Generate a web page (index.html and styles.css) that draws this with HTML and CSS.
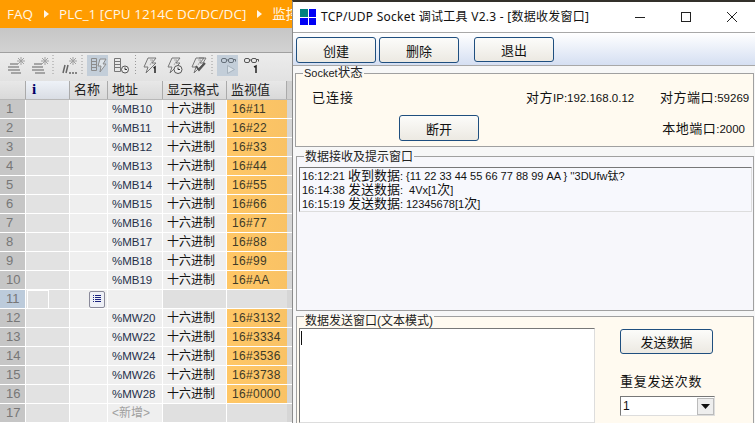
FILE: index.html
```html
<!DOCTYPE html>
<html lang="zh">
<head>
<meta charset="utf-8">
<title>TCP/UDP Socket</title>
<link rel="stylesheet" href="styles.css">
</head>
<body>
<div class="desktop">
  <section class="tia">
    <div class="crumbs"><span>FAQ</span><i class="arrow"></i><span>PLC_1 [CPU 1214C DC/DC/DC]</span><i class="arrow"></i><span>监控</span></div>
    <div class="band"></div>
    <div class="tools">
      <svg width="292" height="28" viewBox="0 0 292 28" fill="none">
        <defs>
          <g id="lines" stroke="#8f8f8f" stroke-width="1.500"><path d="M2 6h8M0 9h11M0 12h12M3 15h10"/></g>
          <g id="star" stroke="#a2a2a2" stroke-width="1"><path d="M4 0v8M0 4h8M1 1l6 6M7 1l-6 6"/></g>
          <g id="bolt" stroke="#777" stroke-width="1"><path d="M5 1h8l-4 5h4L3 16l2-6H1z" fill="#e6e6e6"/><path d="M7 3h3l-3 5" stroke="#aaa"/></g>
        </defs>
        <use href="#lines" x="8" y="5"/><use href="#star" x="17" y="4"/>
        <use href="#lines" x="32" y="5"/><use href="#star" x="41" y="4"/>
        <path d="M53 2v21M82 2v21M135.500 2v21M212 2v21" stroke="#9a9a9a" stroke-dasharray="1 2"/>
        <path d="M63 20l2-8M66 20l2-8" stroke="#666" stroke-width="1.500"/><path d="M69 20h2M72 20h2M75 20h2" stroke="#666" stroke-width="1.500"/><use href="#star" x="69" y="4"/>
        <rect x="87" y="2" width="21" height="21" fill="#c3ced9"/>
        <path d="M91.500 5.500h5v12h-5zM92 8.500h4M92 11.500h4M92 14.500h4" stroke="#8c8c8c"/><path d="M100 6h6l-3 5h3l-6 8 1-6h-3z" fill="#dfe5ea" stroke="#8c8c8c"/>
        <path d="M114.500 5.500h6v13h-6zM115 8.500h5M115 11.500h5M115 14.500h5" stroke="#777"/><circle cx="125" cy="16.500" r="3.500" fill="#eee" stroke="#555"/><path d="M125 14.500v2h2" stroke="#333"/>
        <use href="#bolt" x="143" y="4"/><path d="M155 20v-6l-1.500 1" stroke="#222" stroke-width="1.500"/>
        <use href="#bolt" x="167" y="4"/><circle cx="178" cy="16.500" r="4" fill="#eee" stroke="#555"/><path d="M178 14.500v2h2" stroke="#333"/>
        <use href="#bolt" x="191" y="4"/><path d="M199 5h7l-3 5" stroke="#777"/><path d="M196 13l3 4 6-7" stroke="#555" stroke-width="2"/>
        <rect x="217" y="2" width="21" height="21" fill="#c3ced9"/>
        <rect x="221.500" y="5.500" width="5" height="4" rx="1.500" stroke="#66707a"/><rect x="228.500" y="5.500" width="5" height="4" rx="1.500" stroke="#66707a"/><path d="M226 7h3M233 6.500h2.500v2" stroke="#66707a"/><path d="M227.500 12.500v8l7-4z" fill="#dbe3ea" stroke="#a7b3be"/>
        <rect x="244.500" y="5.500" width="5" height="4" rx="1.500" stroke="#555"/><rect x="251.500" y="5.500" width="5" height="4" rx="1.500" stroke="#555"/><path d="M249 7h3M256 6.500h2.500v2" stroke="#555"/><path d="M256 20v-7l-2 1" stroke="#222" stroke-width="1.500"/>
      </svg>
    </div>
    <div class="row head">
      <div></div>
      <div class="info">i</div>
      <div>名称</div><div>地址</div><div>显示格式</div><div>监视值</div>
    </div>
    <div class="row"><div class="n">1</div><div></div><div></div><div class="a">%MB10</div><div class="f">十六进制</div><div class="v">16#11</div></div>
    <div class="row"><div class="n">2</div><div></div><div></div><div class="a">%MB11</div><div class="f">十六进制</div><div class="v">16#22</div></div>
    <div class="row"><div class="n">3</div><div></div><div></div><div class="a">%MB12</div><div class="f">十六进制</div><div class="v">16#33</div></div>
    <div class="row"><div class="n">4</div><div></div><div></div><div class="a">%MB13</div><div class="f">十六进制</div><div class="v">16#44</div></div>
    <div class="row"><div class="n">5</div><div></div><div></div><div class="a">%MB14</div><div class="f">十六进制</div><div class="v">16#55</div></div>
    <div class="row"><div class="n">6</div><div></div><div></div><div class="a">%MB15</div><div class="f">十六进制</div><div class="v">16#66</div></div>
    <div class="row"><div class="n">7</div><div></div><div></div><div class="a">%MB16</div><div class="f">十六进制</div><div class="v">16#77</div></div>
    <div class="row"><div class="n">8</div><div></div><div></div><div class="a">%MB17</div><div class="f">十六进制</div><div class="v">16#88</div></div>
    <div class="row"><div class="n">9</div><div></div><div></div><div class="a">%MB18</div><div class="f">十六进制</div><div class="v">16#99</div></div>
    <div class="row"><div class="n">10</div><div></div><div></div><div class="a">%MB19</div><div class="f">十六进制</div><div class="v">16#AA</div></div>
    <div class="row blank"><div class="n sel">11</div><div class="focus"><span class="box"></span></div><div class="pick"><span class="listbtn"><svg width="10" height="10" viewBox="0 0 10 10"><path d="M1 1.500h1M1 3.500h1M1 5.500h1M1 7.500h1M3 1.500h6M3 3.500h6M3 5.500h6M3 7.500h6" stroke="#1a237e"/></svg></span></div><div class="a"></div><div class="f"></div><div class="v"></div></div>
    <div class="row"><div class="n">12</div><div></div><div></div><div class="a">%MW20</div><div class="f">十六进制</div><div class="v">16#3132</div></div>
    <div class="row"><div class="n">13</div><div></div><div></div><div class="a">%MW22</div><div class="f">十六进制</div><div class="v">16#3334</div></div>
    <div class="row"><div class="n">14</div><div></div><div></div><div class="a">%MW24</div><div class="f">十六进制</div><div class="v">16#3536</div></div>
    <div class="row"><div class="n">15</div><div></div><div></div><div class="a">%MW26</div><div class="f">十六进制</div><div class="v">16#3738</div></div>
    <div class="row"><div class="n">16</div><div></div><div></div><div class="a">%MW28</div><div class="f">十六进制</div><div class="v">16#0000</div></div>
    <div class="row blank"><div class="n">17</div><div></div><div></div><div class="a new">&lt;新增&gt;</div><div class="f"></div><div class="v"></div></div>
  </section>

  <section class="win">
    <header class="titlebar">
      <span class="logo"><i class="teal"></i><i></i><i></i><i></i></span>
      <span class="wtitle">TCP/UDP Socket 调试工具 V2.3 - [数据收发窗口]</span>
      <span class="ctl"><svg width="12" height="12" viewBox="0 0 12 12"><path d="M1 6.500h10" stroke="#222"/></svg></span>
      <span class="ctl"><svg width="12" height="12" viewBox="0 0 12 12"><rect x="1.500" y="1.500" width="9" height="9" fill="none" stroke="#222"/></svg></span>
      <span class="ctl"><svg width="12" height="12" viewBox="0 0 12 12"><path d="M1 1l10 10M11 1L1 11" stroke="#222"/></svg></span>
    </header>
    <div class="bar">
      <button class="btn">创建</button>
      <button class="btn">删除</button>
      <button class="btn exit">退出</button>
    </div>
    <div class="groups">
      <fieldset class="group status">
        <legend>Socket<span class="zh">状态</span></legend>
        <div class="line one"><span class="conn">已连接</span><span class="ip"><span class="wide">对方</span>IP:192.168.0.12</span><span class="port"><span class="wide">对方端口</span>:59269</span></div>
        <div class="line two"><button class="btn off">断开</button><span class="local"><span class="wide">本地端口</span>:2000</span></div>
      </fieldset>
      <fieldset class="group recv">
        <legend>数据接收及提示窗口</legend>
        <div class="log">
          <div>16:12:21 <span class="zh">收到数据</span>: {11 22 33 44 55 66 77 88 99 AA } ''3DUfw钛?</div>
          <div>16:14:38 <span class="zh">发送数据</span>:&nbsp;&nbsp;4Vx[1<span class="zh">次</span>]</div>
          <div>16:15:19 <span class="zh">发送数据</span>: 12345678[1<span class="zh">次</span>]</div>
        </div>
      </fieldset>
      <fieldset class="group send">
        <legend>数据发送窗口(文本模式)</legend>
        <div class="sendbody">
          <div class="input"><span class="caret"></span></div>
          <div class="side">
            <button class="btn sendbtn">发送数据</button>
            <div class="repeat">重复发送次数</div>
            <div class="combo"><span>1</span><span class="drop"><svg width="9" height="5" viewBox="0 0 9 5"><path d="M0 0h9L4.500 5z" fill="#111"/></svg></span></div>
          </div>
        </div>
      </fieldset>
    </div>
  </section>
</div>
</body>
</html>
```
FILE: styles.css
```css
* { box-sizing: border-box; }
html, body { margin: 0; padding: 0; }
body { width: 755px; height: 423px; overflow: hidden; background: #d0d0d0; }
.desktop { position: relative; width: 755px; height: 423px; overflow: hidden; font-family: "Liberation Sans", "Noto Sans CJK SC", sans-serif; }

.tia { width: 292px; height: 423px; background: #d4d4d4; }
.crumbs { height: 28px; background: #ff9c00; color: #fff6e6; font: 13.500px/28px "Open Sans", "Noto Sans CJK SC", sans-serif; padding-left: 7px; display: flex; align-items: center; white-space: nowrap; overflow: hidden; }
.arrow { flex: none; width: 0; height: 0; border-left: 5px solid #fff6e6; border-top: 4px solid transparent; border-bottom: 4px solid transparent; margin: 0 10px 0 11px; }
.band { height: 25px; background: linear-gradient(#c6c6c6, #d2d2d2); border-bottom: 1px solid #a0a0a0; }
.tools { height: 28px; background: linear-gradient(#ececec, #e2e2e2); overflow: hidden; }
.tools svg { display: block; }

.row { display: grid; grid-template-columns: 26px 44px 38px 55px 64px 60px; height: 19px; width: 292px; padding-right: 5px; border-bottom: 1px solid #fff; font: 12px/18px "Liberation Sans", "Noto Sans CJK SC", sans-serif; background: linear-gradient(90deg, #fff 287px, #d6d6d6 287px); }
.row > div { background: #efefef; border-right: 1px solid #fff; overflow: hidden; white-space: nowrap; }
.row > div:nth-child(2) { background: #e2e2e2; }
.row > .n { background: #c6c6c6; color: #777; padding-left: 6px; font-size: 13px; }
.row .a { color: #26304a; padding-left: 4px; font-size: 11.500px; }
.row .f { color: #111; padding-left: 4px; }
.row .v { background: linear-gradient(90deg, #ffc766, #f9c265); color: #3d3a28; padding-left: 5px; letter-spacing: .3px; border-right: 0; }
.row.blank .f, .row.blank .v { background: #e0e0e0; }
.row.blank .a { background: #efefef; }
.row .n.sel { background: #bccbdb; }
.row > .new { color: #a0a0a0; font-size: 12px; }
.row .focus { position: relative; }
.box { position: absolute; left: 1px; top: 0; width: 22px; height: 19px; border: 1px solid #fff; }
.pick { display: flex; justify-content: flex-end; align-items: center; padding-right: 2px; }
.listbtn { width: 16px; height: 17px; display: flex; align-items: center; justify-content: center; background: #eef0f6; border: 1px solid #8a8a9a; border-radius: 2px; }

.row.head { background: linear-gradient(90deg, #e2e2e2 287px, #d0d0d0 287px); border-bottom: 1px solid #b8b8b8; color: #222; font-size: 13px; line-height: 17px; }
.row.head > div { background: linear-gradient(#e8e8e8, #d9d9d9); border-right: 1px solid #aaa; padding-left: 4px; }
.row.head > .info { background: linear-gradient(#eef2f8, #d9dde4); color: #000066; font: bold 15px/17px "Liberation Serif", serif; padding-left: 6px; }

.win { position: absolute; left: 292px; top: 0; width: 463px; height: 423px; background: #f7f7f7; border-top: 2px solid #33302a; border-left: 1px solid #8c8c8c; display: flex; flex-direction: column; font-size: 12px; color: #111; }
.titlebar { height: 31px; flex: none; background: #fff; border-bottom: 1px solid #a8a8a8; display: flex; align-items: center; padding-left: 7px; }
.logo { flex: none; width: 16px; height: 16px; display: grid; gap: 1px; grid-template-columns: 7.500px 7.500px; grid-template-rows: 7.500px 7.500px; margin-right: 5px; }
.logo i { background: #0000f5; }
.logo i.teal { background: #008080; }
.wtitle { flex: 1; font: 12px/16px "Noto Sans", "Noto Sans CJK SC", sans-serif; letter-spacing: .26px; color: #111; white-space: nowrap; }
.ctl { flex: none; width: 46px; display: flex; justify-content: center; }
.bar { height: 33px; flex: none; background: linear-gradient(#fff, #d5dff2); border-bottom: 1px solid #a8a8a8; display: flex; align-items: flex-start; padding: 4px 0 0 3px; gap: 3px; }
.btn { font: 13px/1 "Noto Sans CJK SC", sans-serif; color: #111; background: linear-gradient(#fcfcfa, #ece9e2); border: 1px solid #1f4f7f; border-radius: 3px; padding: 0; width: 80px; height: 26px; }
.btn.exit { margin-left: 12px; height: 25px; }

.groups { flex: 1; display: flex; flex-direction: column; padding: 0 1px 0 2px; min-height: 0; }
.group { margin: 0; padding: 0; border: 1px solid #a0a0a0; min-width: 0; }
.group legend { font: 12px/14px "Liberation Sans", "Noto Sans CJK SC", sans-serif; padding: 0 1px; margin-left: 7px; color: #222; }
.status { flex: none; height: 81px; background: #fffaf0; }
.status legend { font-size: 11px; }
.zh { font-size: 13px; }
.status .zh { font-size: 12.500px; }
.wide { font-size: 13px; letter-spacing: .5px; }
.line { display: flex; font-size: 11.500px; }
.line.one { height: 35px; padding-top: 10px; line-height: 16px; }
.conn { margin-left: 16px; font-size: 13px; letter-spacing: 1px; width: 214px; }
.ip { width: 134px; }
.port { white-space: nowrap; }
.line.two { justify-content: space-between; padding-left: 103px; }
.off { width: 80px; }
.local { margin: 6px 8px 0 0; line-height: 16px; }

.recv { flex: none; height: 163px; background: #f7f7fb; margin: 1px 0 0 1px; display: flex; flex-direction: column; }
.recv legend { padding-top: 2px; }
.log { flex: 1; margin: 3px 1px 2px 2px; background: #f7f8fd; border: 1px solid #ddd; border-top-color: #777; border-left-color: #777; padding: 1px 0 0 2px; font: 11px/13px "Liberation Sans", "Noto Sans CJK SC", sans-serif; color: #111; white-space: nowrap; overflow: hidden; }
.send { flex: 1; background: #fffaf0; border-bottom: 0; margin: -6px 0 0 1px; min-height: 0; }
.send legend { padding-top: 9px; }
.sendbody { display: flex; height: 100%; padding-left: 2px; }
.input { flex: none; width: 296px; height: 100%; background: #fff; border: 1px solid #ddd; border-top-color: #777; border-left-color: #777; padding: 2px 0 0 1px; }
.caret { display: block; width: 1px; height: 14px; background: #111; }
.side { padding-left: 25px; display: flex; flex-direction: column; align-items: flex-start; }
.sendbtn { width: 93px; height: 25px; margin-top: 1px; }
.repeat { margin-top: 20px; font-size: 13px; letter-spacing: .7px; line-height: 16px; }
.combo { margin-top: 6px; width: 95px; height: 20px; background: #fff; border: 1px solid #777; border-right-color: #ddd; border-bottom-color: #ddd; display: flex; justify-content: space-between; align-items: center; padding-left: 2px; }
.drop { width: 17px; height: 17px; background: #eee; border: 1px solid #bbb; display: flex; align-items: center; justify-content: center; }
```
